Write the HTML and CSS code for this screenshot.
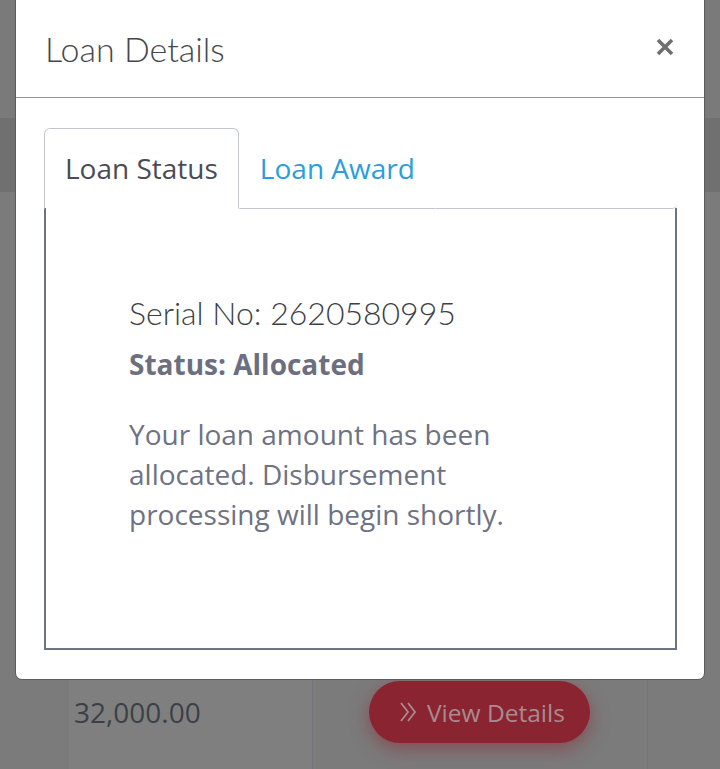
FILE: index.html
```html
<!DOCTYPE html>
<html lang="en">
<head>
<meta charset="utf-8">
<title>Loan Details</title>
<link rel="stylesheet" href="styles.css">
</head>
<body>
<div class="page">
  <div class="topbar"></div>
  <div class="band"></div>
  <div class="table">
    <div class="row">
      <div class="cell spacer"></div>
      <div class="cell amount">32,000.00</div>
      <div class="cell action">
        <span class="btn">
          <svg class="btn-icon" width="20" height="26" viewBox="0 0 20 26"><path d="M3 4 L10 13 L3 22 M10 4 L17 13 L10 22" fill="none" stroke="currentColor" stroke-width="1.8"/></svg>
          View Details
        </span>
      </div>
      <div class="cell rest"></div>
    </div>
  </div>
</div>

<div class="modal">
  <div class="modal-header">
    <h5 class="modal-title">Loan Details</h5>
    <span class="close">
      <svg width="18" height="18" viewBox="0 0 18 18"><path d="M2 2 L16 16 M16 2 L2 16" fill="none" stroke="currentColor" stroke-width="3.6"/></svg>
    </span>
  </div>
  <div class="modal-body">
    <ul class="tabs">
      <li class="tab active">Loan Status</li>
      <li class="tab">Loan Award</li>
      <li class="tab-fill"></li>
    </ul>
    <div class="tab-content">
      <p class="serial">Serial No: 2620580995</p>
      <p class="status">Status: Allocated</p>
      <p class="message">Your loan amount has been allocated. Disbursement processing will begin shortly.</p>
    </div>
  </div>
</div>
</body>
</html>
```

FILE: styles.css
```css
html, body {
  margin: 0;
  padding: 0;
}
body {
  width: 720px;
  height: 769px;
  overflow: hidden;
  background: #7b7b7b;
  font-family: "Open Sans", "Liberation Sans", sans-serif;
  position: relative;
}
.page {
  display: flex;
  flex-direction: column;
  height: 769px;
}
.topbar {
  height: 118px;
  background: #7a7a7a;
}
.band {
  height: 74px;
  background: #707070;
}
.table {
  flex: 1;
  display: flex;
  flex-direction: column;
  justify-content: flex-end;
  background: #7b7b7b;
}
.row {
  display: grid;
  grid-template-columns: 69px 244px 335px 1fr;
  height: 140px;
}
.cell {
  display: flex;
  align-items: center;
  padding-top: 26px;
}
.amount {
  background: #7f7f7f;
  border-right: 1px solid #74767e;
  padding-left: 5px;
  font-size: 28px;
  color: #3d3f48;
  box-sizing: border-box;
}
.action {
  border-right: 1px solid #74767e;
  justify-content: flex-start;
  padding-left: 56px;
}
.btn {
  display: inline-flex;
  align-items: center;
  gap: 9px;
  height: 62px;
  padding: 0 20px 0 29px;
  border-radius: 31px;
  background: #8a2431;
  color: #a98a8f;
  font-size: 24.5px;
  box-shadow: 0 6px 18px rgba(140, 40, 55, 0.55);
  box-sizing: border-box;
  width: 221px;
}
.btn-icon {
  display: block;
}

.modal {
  position: absolute;
  left: 15px;
  top: -8px;
  width: 690px;
  background: #fff;
  border: 1px solid #5c5c5c;
  border-radius: 7px;
  box-sizing: border-box;
}
.modal-header {
  height: 105px;
  box-sizing: border-box;
  border-bottom: 1px solid #8e949c;
  display: flex;
  align-items: center;
  justify-content: space-between;
  padding: 6px 30px 0 29px;
}
.modal-title {
  margin: 0;
  font-family: "Lato", "Liberation Sans", sans-serif;
  font-weight: 300;
  font-size: 34px;
  color: #45474d;
}
.close {
  color: #6f6f6f;
  display: flex;
  margin-top: -2px;
}
.modal-body {
  padding: 30px 27px 29px 28px;
}
.tabs {
  list-style: none;
  margin: 0;
  padding: 0;
  display: flex;
  height: 81px;
}
.tab {
  font-size: 28px;
  line-height: 39px;
  padding: 20px 20px 21px 20px;
  color: #2a9de0;
  border: 1px solid transparent;
  border-bottom: 1px solid #c3c6cb;
  border-radius: 6px 6px 0 0;
}
.tab.active {
  color: #4a4c54;
  border-color: #c3c6cb;
  border-bottom-color: transparent;
}
.tab-fill {
  flex: 1;
  border-bottom: 1px solid #c3c6cb;
  border-bottom-right-radius: 5px;
}
.tab-content {
  border: 2px solid #6b7385;
  border-top: none;
  height: 442px;
  box-sizing: border-box;
  padding: 85px 100px 0 83px;
  margin-top: -1px;
}
.tab-content p {
  margin: 0;
}
.serial {
  font-family: "Lato", "Liberation Sans", sans-serif;
  font-weight: 300;
  font-size: 32px;
  line-height: 40px;
  color: #3d3f47;
}
.status {
  margin-top: 12px !important;
  font-weight: 700;
  font-size: 28px;
  line-height: 38px;
  color: #6b6f80;
}
.message {
  margin-top: 31px !important;
  font-size: 28px;
  line-height: 40px;
  color: #6e7283;
}
```
